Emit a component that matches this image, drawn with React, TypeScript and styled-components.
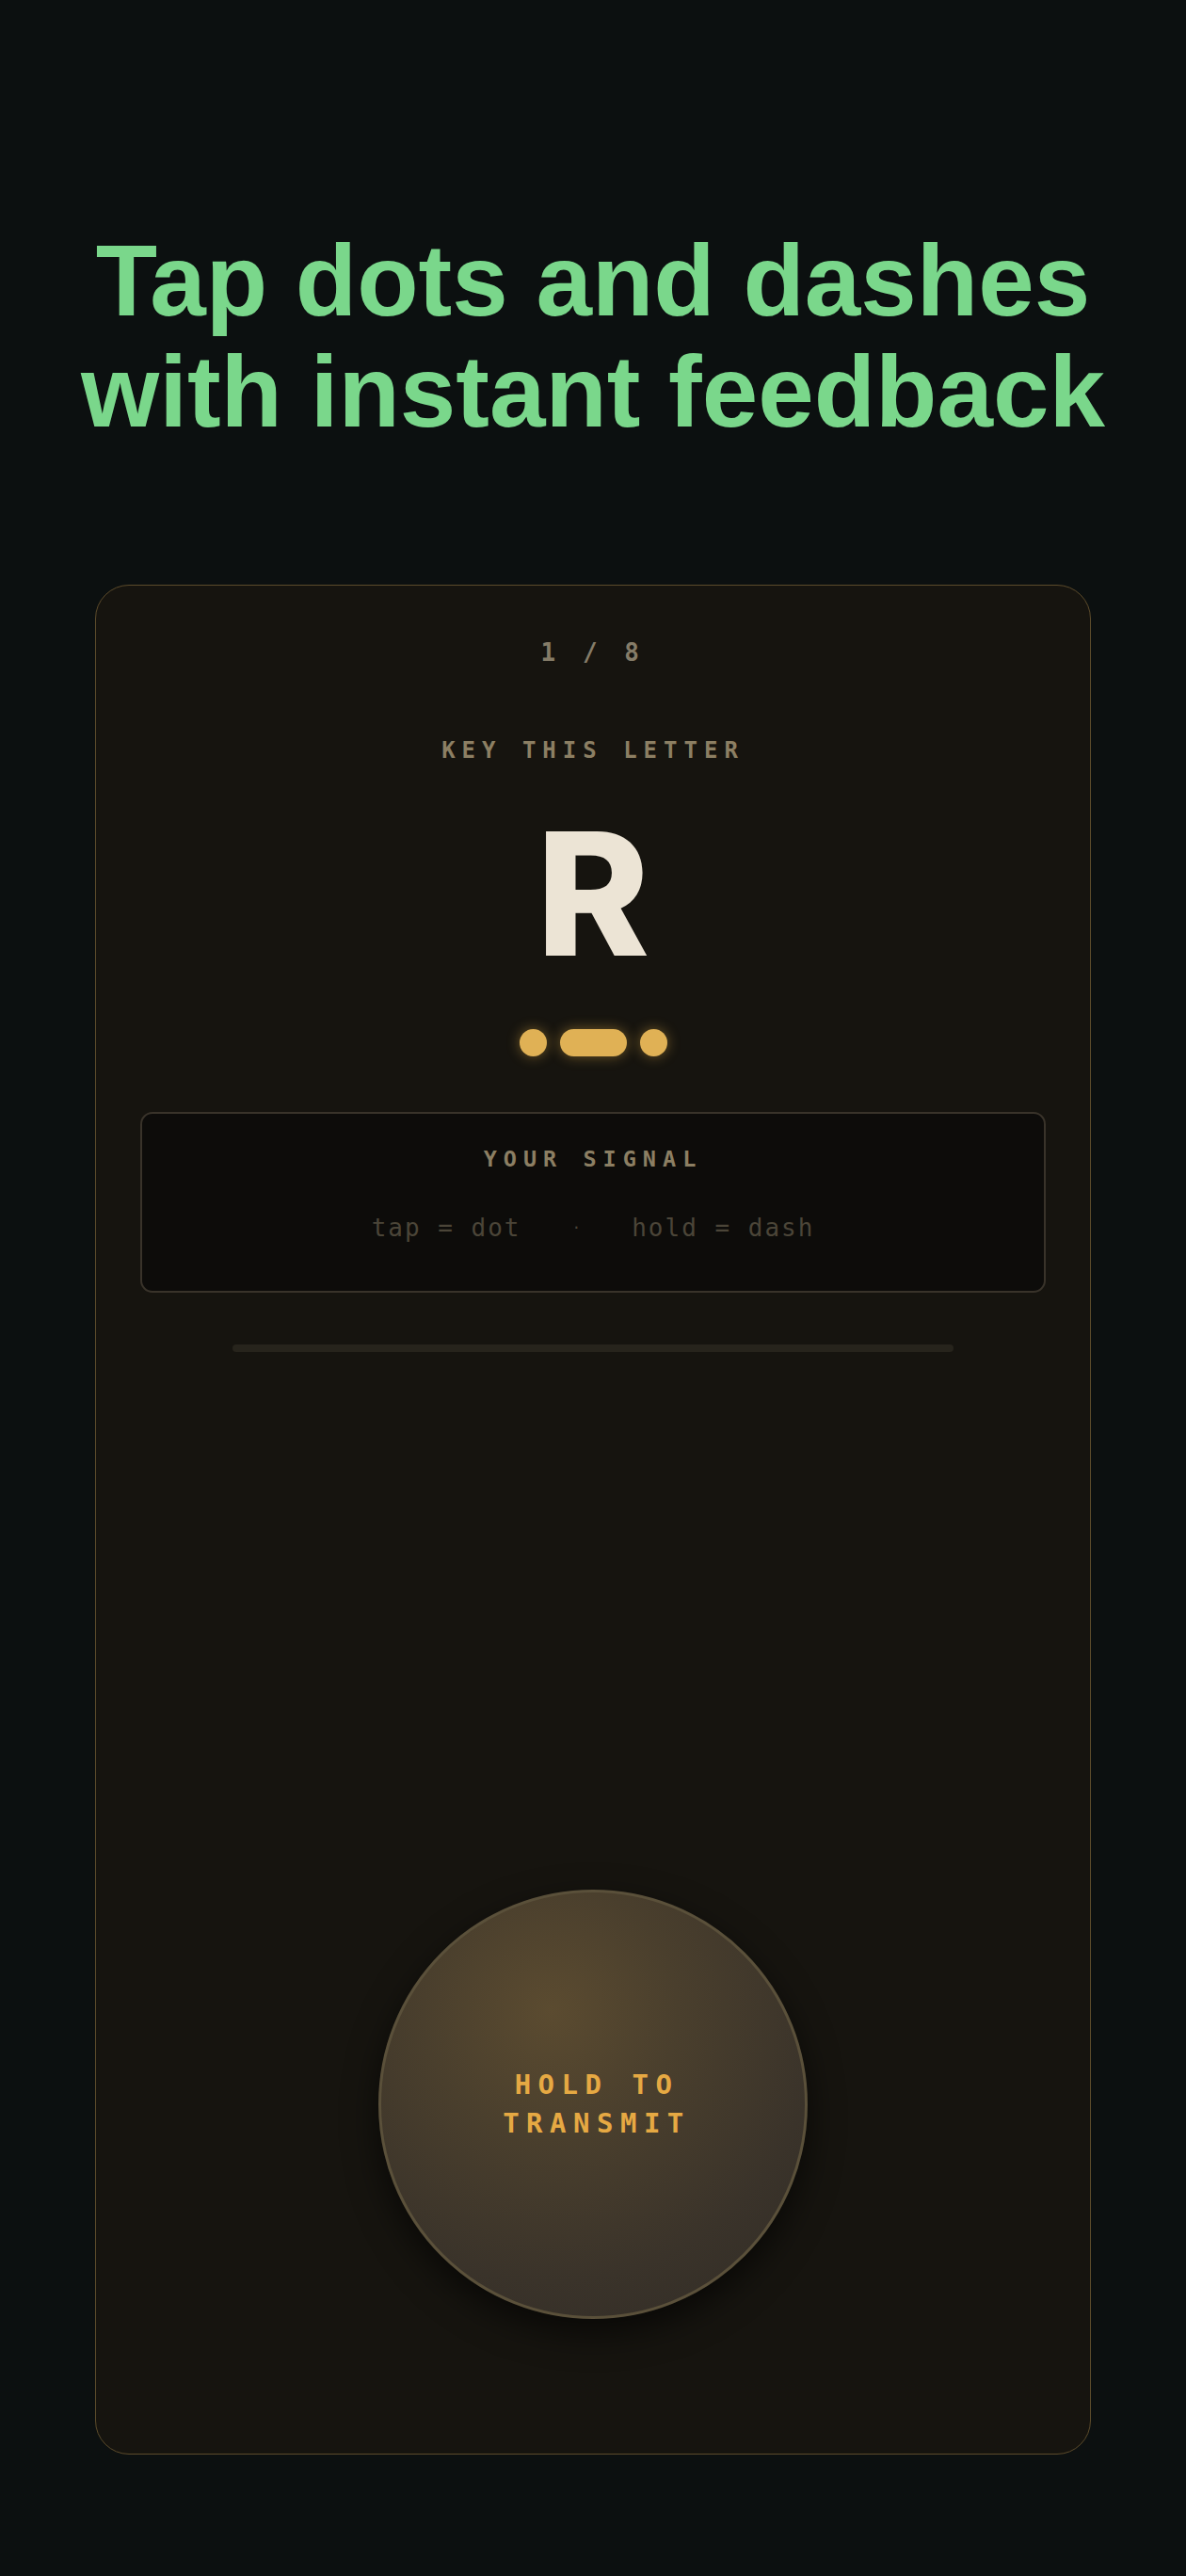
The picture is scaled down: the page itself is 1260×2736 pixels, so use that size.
import React from "react";
import styled, {createGlobalStyle} from "styled-components";

const MONO = `"DejaVu Sans Mono", "Liberation Mono", monospace`;

const GlobalStyle = createGlobalStyle`
    html, body {
        margin: 0;
        padding: 0;
        background: #0c1010;
    }
    body {
        font-family: "Liberation Sans", Arial, sans-serif;
    }
`;

type Signal = "dot" | "dash";

const PATTERN: Signal[] = ["dot", "dash", "dot"];

const App: React.FC = () => {
    return (
        <Page>
            <GlobalStyle/>
            <Headline>
                Tap dots and dashes
                <br/>
                with instant feedback
            </Headline>

            <Card>
                <Counter>1 / 8</Counter>
                <Label>KEY THIS LETTER</Label>
                <Letter>R</Letter>

                <Morse>
                    {PATTERN.map((s, i) => (
                        <Mark key={i} kind={s}/>
                    ))}
                </Morse>

                <SignalBox>
                    <Label>YOUR SIGNAL</Label>
                    <Hint>
                        <span>tap = dot</span>
                        <Sep>·</Sep>
                        <span>hold = dash</span>
                    </Hint>
                </SignalBox>

                <Track/>

                <KeyButton type="button">
                    HOLD TO
                    <br/>
                    TRANSMIT
                </KeyButton>
            </Card>
        </Page>
    );
};

const Page = styled.div`
    display: flex;
    flex-direction: column;
    align-items: center;
    padding: 239px 0 129px;
`;

const Headline = styled.h1`
    margin: 0;
    font-family: "Liberation Sans", Arial, sans-serif;
    font-weight: 700;
    font-size: 107px;
    line-height: 118px;
    color: #7ad78b;
    text-align: center;
`;

const Card = styled.div`
    box-sizing: border-box;
    width: 1058px;
    height: 1986px;
    margin-top: 146px;
    padding: 56px 47px 143px;
    display: flex;
    flex-direction: column;
    align-items: center;
    background: #16140f;
    border: 1px solid #5c4b2b;
    border-radius: 36px;
`;

const Counter = styled.div`
    font-family: ${MONO};
    font-weight: 700;
    font-size: 26px;
    line-height: 30px;
    letter-spacing: 6.5px;
    color: #857c68;
`;

const Label = styled.div`
    margin-top: 76px;
    font-family: ${MONO};
    font-weight: 700;
    font-size: 24px;
    line-height: 26px;
    letter-spacing: 7px;
    color: #8c7f63;
`;

const Letter = styled.div`
    margin-top: 48px;
    font-family: Inter, "Noto Sans", sans-serif;
    font-weight: 800;
    font-size: 182px;
    line-height: 1;
    color: #ece4d5;
`;

const Morse = styled.div`
    margin-top: 53px;
    display: flex;
    align-items: center;
    gap: 14px;
`;

const Mark = styled.span<{ kind: Signal }>`
    display: block;
    width: ${p => (p.kind === "dash" ? "71px" : "29px")};
    height: 29px;
    border-radius: 15px;
    background: #e0b155;
    box-shadow: 0 0 14px rgba(224, 172, 72, 0.45);
`;

const SignalBox = styled.div`
    box-sizing: border-box;
    width: 100%;
    height: 192px;
    margin-top: 59px;
    padding-top: 35px;
    display: flex;
    flex-direction: column;
    align-items: center;
    background: #0d0c0a;
    border: 2px solid #39332a;
    border-radius: 13px;

    ${Label} {
        margin-top: 0;
        font-size: 23.5px;
    }
`;

const Hint = styled.div`
    margin-top: 45px;
    display: flex;
    align-items: center;
    font-family: ${MONO};
    font-size: 26px;
    line-height: 30px;
    letter-spacing: 2px;
    color: #4b4538;
`;

const Sep = styled.span`
    margin: 0 52px 0 54px;
    font-size: 16px;
`;

const Track = styled.div`
    width: 766px;
    height: 8px;
    margin-top: 55px;
    border-radius: 4px;
    background: #27241c;
`;

const KeyButton = styled.button`
    margin-top: auto;
    box-sizing: border-box;
    width: 456px;
    height: 456px;
    border-radius: 50%;
    border: 3px solid #5a503a;
    background: radial-gradient(circle at 40% 28%, #5b4b30 0%, #4a3f2d 32%, #3a332a 68%, #302b25 100%);
    box-shadow: 0 14px 36px rgba(0, 0, 0, 0.6);
    display: flex;
    align-items: center;
    justify-content: center;
    padding: 0 0 0 8px;
    font-family: ${MONO};
    font-weight: 700;
    font-size: 29px;
    line-height: 41px;
    letter-spacing: 7.5px;
    color: #e6a943;
    text-align: center;
    cursor: pointer;
`;

export default App;
